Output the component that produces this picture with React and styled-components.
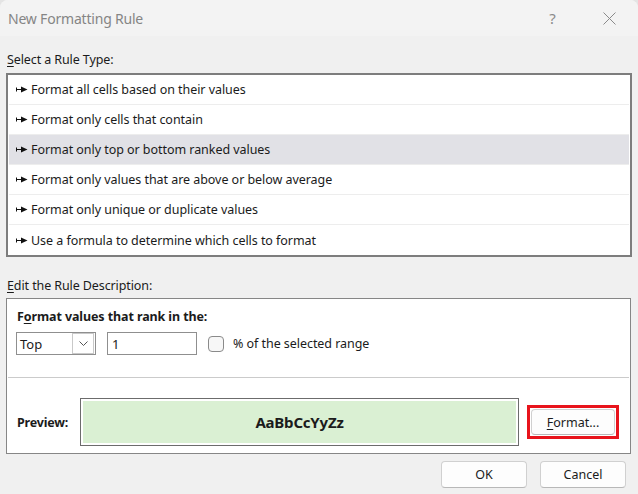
import React from "react";
import styled, { createGlobalStyle } from "styled-components";

const Global = createGlobalStyle`
  html, body { margin: 0; padding: 0; background: #e4e4e4; }
  body { font-family: "Noto Sans", "Open Sans", sans-serif; color: #1b1b1b; }
  * { box-sizing: border-box; }
`;

const Dialog = styled.div`
  position: relative;
  width: 638px;
  height: 494px;
  background: #f0f0f0;
  border-radius: 8px 8px 0 0;
  overflow: hidden;
  display: flex;
  flex-direction: column;
`;

const TitleBar = styled.div`
  height: 36px;
  background: #f3f3f3;
  display: flex;
  align-items: center;
  padding-left: 8px;
`;

const Title = styled.div`
  flex: 1;
  font-size: 14px;
  color: #858585;
  letter-spacing: -0.2px;
`;

const TitleButton = styled.div`
  width: 57px;
  height: 36px;
  display: flex;
  align-items: center;
  justify-content: center;
  color: #8a8a8a;
  font-size: 15px;
`;

const Body = styled.div`
  padding: 0 6px;
  display: flex;
  flex-direction: column;
`;

const SectionLabel = styled.div`
  font-size: 12.5px;
  line-height: 16px;
  height: 16px;
  margin-top: ${(p) => p.$top}px;
  margin-bottom: ${(p) => p.$bottom}px;
  padding-left: 1px;
  letter-spacing: -0.1px;
  u { text-decoration: underline; text-underline-offset: 2px; }
`;

const List = styled.div`
  width: 626px;
  border: 2px solid #7d7d7d;
  background: #fff;
  padding: 0 1px;
  display: flex;
  flex-direction: column;
`;

const Row = styled.div`
  height: 30px;
  display: flex;
  align-items: center;
  padding-left: 7px;
  gap: 3px;
  font-size: 12.5px;
  letter-spacing: -0.05px;
  background: ${(p) => (p.$selected ? "#e1e1e6" : "#fff")};
  border-bottom: ${(p) => (p.$last ? "none" : "1px solid #ededed")};
`;

const Box = styled.div`
  width: 625px;
  border: 1px solid #868686;
  background: #fff;
  display: flex;
  flex-direction: column;
`;

const TopSection = styled.div`
  padding: 10px 8px 22px 8px;
  margin: 0 1px;
  border-bottom: 1px solid #cbcbcb;
  display: flex;
  flex-direction: column;
  gap: 7px;
`;

const Heading = styled.div`
  font-size: 12.5px;
  font-weight: 700;
  line-height: 16px;
  padding-left: 1px;
  letter-spacing: -0.1px;
  u { text-decoration: underline; text-underline-offset: 2px; }
`;

const Controls = styled.div`
  display: flex;
  align-items: center;
  height: 23px;
`;

const Select = styled.div`
  width: 80px;
  height: 23px;
  border: 1px solid #8f8f8f;
  display: flex;
  align-items: center;
  padding: 1px;
  font-size: 13px;
`;

const SelectValue = styled.div`
  flex: 1;
  padding-left: 2px;
`;

const SelectButton = styled.div`
  width: 22px;
  height: 21px;
  border: 1px solid #c9c9c9;
  display: flex;
  align-items: center;
  justify-content: center;
`;

const Input = styled.div`
  width: 90px;
  height: 23px;
  margin-left: 11px;
  border: 1px solid #8f8f8f;
  font-size: 13px;
  padding-left: 4px;
  display: flex;
  align-items: center;
`;

const Checkbox = styled.div`
  width: 16px;
  height: 16px;
  margin-left: 11px;
  border: 1px solid #8a8a8a;
  border-radius: 4px;
  background: #f7f7f7;
`;

const CheckText = styled.div`
  margin-left: 9px;
  font-size: 12.5px;
  letter-spacing: -0.05px;
`;

const BottomSection = styled.div`
  padding: 20px 0 7px 10px;
  display: flex;
  align-items: center;
`;

const PreviewLabel = styled.div`
  width: 63px;
  font-size: 12.5px;
  font-weight: 700;
  letter-spacing: -0.2px;
`;

const PreviewBox = styled.div`
  width: 439px;
  height: 48px;
  border: 1px solid #6c6c6c;
  padding: 2px;
  background: #fff;
`;

const PreviewFill = styled.div`
  height: 100%;
  background: #daf0d3;
  display: flex;
  align-items: center;
  justify-content: center;
  font-size: 15px;
  font-weight: 700;
  letter-spacing: -0.2px;
`;

const Highlight = styled.div`
  margin-left: 8px;
  width: 92px;
  height: 34px;
  border: 3px solid #e8141c;
  padding: 1px;
`;

const Button = styled.div`
  width: ${(p) => p.$w}px;
  height: ${(p) => p.$h}px;
  background: #fdfdfd;
  border: 1px solid #d0d0d0;
  border-bottom-color: #b8b8b8;
  border-radius: 4px;
  display: flex;
  align-items: center;
  justify-content: center;
  font-size: 12.5px;
  color: #1b1b1b;
  u { text-decoration: underline; text-underline-offset: 2px; }
`;

const Footer = styled.div`
  display: flex;
  justify-content: flex-end;
  gap: 13px;
  padding: 7px 12px 0 0;
`;

const Grip = styled.div`
  position: absolute;
  right: 1px;
  bottom: 1px;
  width: 6px;
  height: 6px;
`;

const Arrow = () => (
  <svg width="12" height="7" viewBox="0 0 12 7">
    <path d="M0.5 1.5 V5.5" stroke="#111" strokeWidth="1" />
    <path d="M0.5 3.5 H6" stroke="#111" strokeWidth="1.2" />
    <path d="M5 0.6 L11.5 3.5 L5 6.4 Z" fill="#111" />
  </svg>
);

const rows = [
  "Format all cells based on their values",
  "Format only cells that contain",
  "Format only top or bottom ranked values",
  "Format only values that are above or below average",
  "Format only unique or duplicate values",
  "Use a formula to determine which cells to format",
];

export default function App() {
  return (
    <>
      <Global />
      <Dialog>
        <TitleBar>
          <Title>New Formatting Rule</Title>
          <TitleButton>?</TitleButton>
          <TitleButton>
            <svg width="13" height="13" viewBox="0 0 13 13">
              <path d="M0.5 0.5 L12.5 12.5 M12.5 0.5 L0.5 12.5" stroke="#8a8a8a" strokeWidth="1" />
            </svg>
          </TitleButton>
        </TitleBar>
        <Body>
          <SectionLabel $top={16} $bottom={5}>
            <u>S</u>elect a Rule Type:
          </SectionLabel>
          <List>
            {rows.map((r, i) => (
              <Row key={r} $selected={i === 2} $last={i === rows.length - 1}>
                <Arrow />
                {r}
              </Row>
            ))}
          </List>
          <SectionLabel $top={21} $bottom={4}>
            <u>E</u>dit the Rule Description:
          </SectionLabel>
          <Box>
            <TopSection>
              <Heading>
                F<u>o</u>rmat values that rank in the:
              </Heading>
              <Controls>
                <Select>
                  <SelectValue>Top</SelectValue>
                  <SelectButton>
                    <svg width="9" height="5" viewBox="0 0 9 5">
                      <path d="M0.5 0.5 L4.5 4.5 L8.5 0.5" stroke="#555" fill="none" strokeWidth="1" />
                    </svg>
                  </SelectButton>
                </Select>
                <Input>1</Input>
                <Checkbox />
                <CheckText>% of the selected range</CheckText>
              </Controls>
            </TopSection>
            <BottomSection>
              <PreviewLabel>Preview:</PreviewLabel>
              <PreviewBox>
                <PreviewFill>AaBbCcYyZz</PreviewFill>
              </PreviewBox>
              <Highlight>
                <Button $w={84} $h={26}>
                  <u>F</u>ormat...
                </Button>
              </Highlight>
            </BottomSection>
          </Box>
        </Body>
        <Footer>
          <Button $w={86} $h={27}>OK</Button>
          <Button $w={86} $h={27}>Cancel</Button>
        </Footer>
        <Grip>
          <svg width="6" height="6" viewBox="0 0 6 6">
            <rect x="4" y="0" width="1" height="1" fill="#999" />
            <rect x="2" y="2" width="1" height="1" fill="#999" />
            <rect x="4" y="2" width="1" height="1" fill="#999" />
            <rect x="0" y="4" width="1" height="1" fill="#999" />
            <rect x="2" y="4" width="1" height="1" fill="#999" />
            <rect x="4" y="4" width="1" height="1" fill="#999" />
          </svg>
        </Grip>
      </Dialog>
    </>
  );
}
